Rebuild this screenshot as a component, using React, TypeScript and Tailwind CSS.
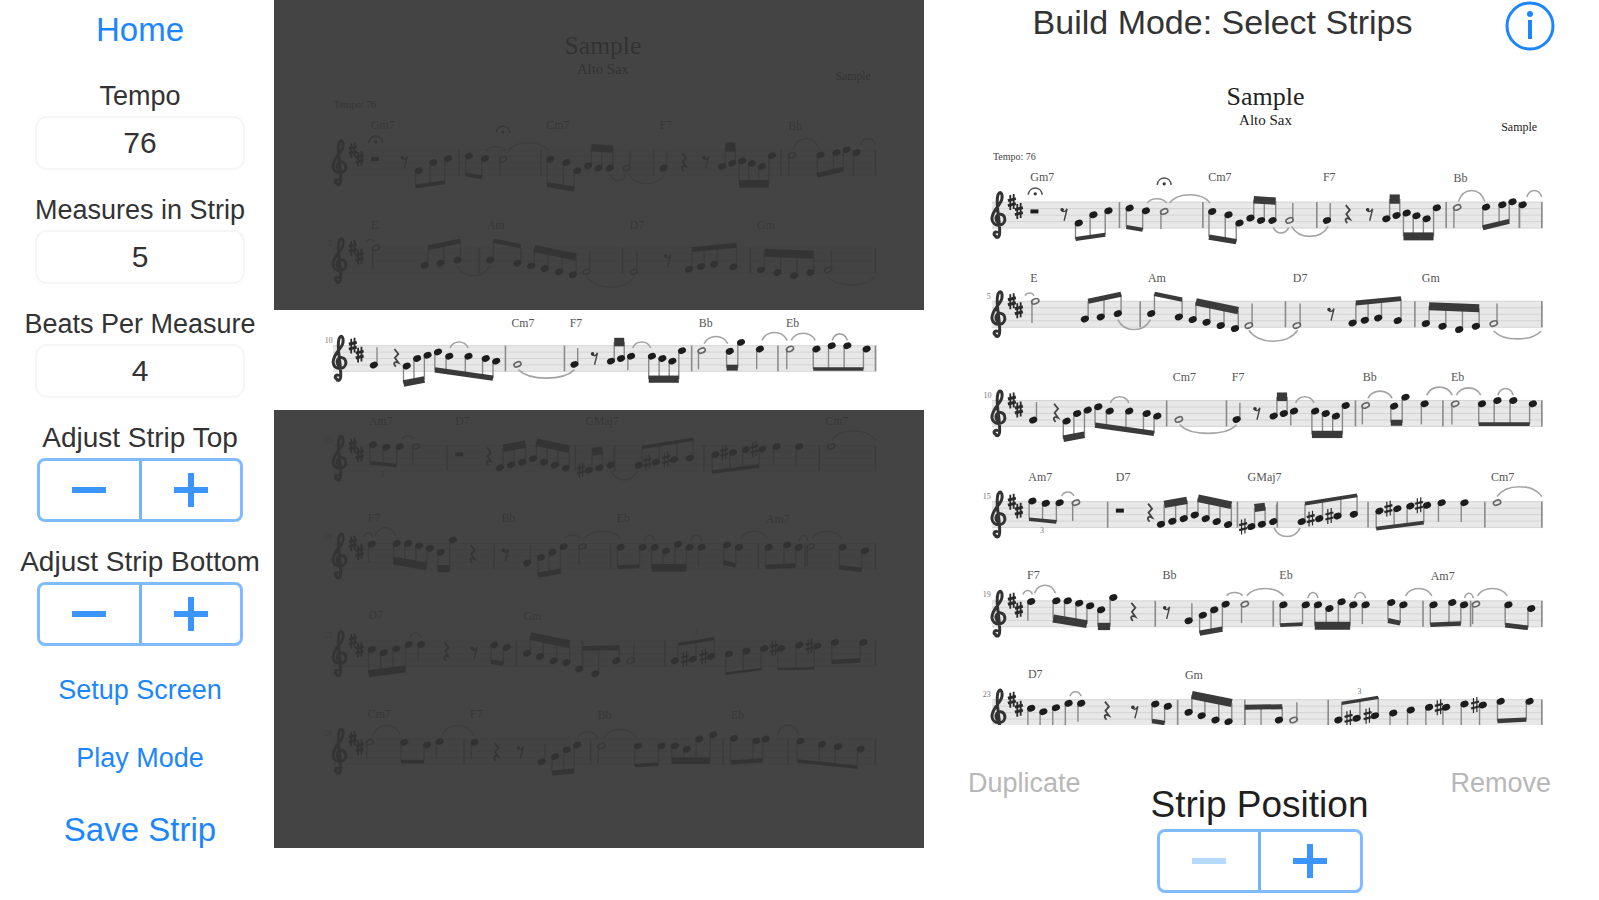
import { useId, useState } from "react";

type Point = [x: number, y: number];
type Stemmed = [x: number, y: number, stem?: number];
type Slur = [x1: number, x2: number, y: number, peak: number];
type Beam = [y1: number, y2: number, thickness: number, ...notes: Point[]];

interface System {
  origin: number;
  top: number;
  chords: [x: number, y: number, name: string][];
  bars: number[];
  notes?: Stemmed[];
  hollow?: Stemmed[];
  beams: Beam[];
  slurs: Slur[];
  sharps?: Point[];
  fermatas?: Point[];
  halfRests?: Point[];
  quarterRests?: Point[];
  eighthRests?: Point[];
  marks?: [x: number, y: number, text: string][];
}

const systems: System[] = [
  {
    origin: 0,
    top: 607,
    chords: [[173, 544, "Gm7"], [610, 544, "Cm7"], [892, 544, "F7"], [1213, 546, "Bb"]],
    bars: [392, 597, 877, 1195, 1375, 1430],
    notes: [[902, 662, 610]],
    hollow: [[502, 635, 688], [810, 662, 610], [1222, 623, 685]],
    beams: [
      [718, 705, 12, [292, 670], [328, 645], [365, 633]],
      [682, 690, 12, [417, 625], [457, 633]],
      [712, 726, 16, [620, 635], [660, 645], [687, 670]],
      [600, 604, 22, [714, 655], [740, 662], [768, 662]],
      [598, 598, 28, [1048, 657], [1073, 647]],
      [710, 710, 24, [1098, 640], [1122, 648], [1147, 657], [1172, 624]],
      [684, 665, 15, [1293, 622], [1333, 615], [1358, 606]],
      [685, 685, 2, [1383, 615]],
    ],
    slurs: [
      [460, 508, 610, 597],
      [515, 615, 610, 585],
      [770, 808, 683, 700],
      [815, 905, 680, 710],
      [1225, 1290, 605, 572],
      [1393, 1430, 592, 572],
    ],
    fermatas: [[185, 582], [502, 552]],
    halfRests: [[183, 635]],
    quarterRests: [[952, 643]],
    eighthRests: [[256, 642], [1007, 642]],
  },
  {
    origin: 250,
    top: 155,
    chords: [[173, 97, "E"], [462, 97, "Am"], [818, 97, "D7"], [1135, 97, "Gm"]],
    bars: [443, 800, 1118, 1430],
    hollow: [[185, 155, 220], [710, 228, 162], [828, 228, 162], [1312, 222, 162]],
    beams: [
      [155, 134, 15, [307, 208], [346, 202], [388, 192]],
      [133, 150, 13, [470, 192], [538, 202]],
      [157, 183, 22, [572, 210], [606, 218], [641, 228], [676, 237]],
      [160, 147, 15, [965, 220], [995, 212], [1028, 205], [1076, 213]],
      [170, 176, 24, [1145, 222], [1186, 230], [1227, 240], [1268, 230]],
    ],
    slurs: [
      [160, 182, 138, 130],
      [388, 468, 210, 240],
      [710, 830, 242, 275],
      [1312, 1428, 244, 268],
    ],
    eighthRests: [[912, 192]],
    marks: [[66, 148, "5"]],
  },
  {
    origin: 250,
    top: 453,
    chords: [[523, 395, "Cm7"], [668, 395, "F7"], [990, 395, "Bb"], [1207, 395, "Eb"]],
    bars: [508, 655, 972, 1187, 1430],
    notes: [[180, 512, 458], [680, 510, 460], [821, 485, 528], [1142, 463, 525]],
    hollow: [[538, 510], [997, 468, 525], [1217, 463, 525]],
    beams: [
      [568, 556, 20, [262, 515], [288, 492], [314, 482]],
      [527, 552, 16, [340, 472], [368, 485], [416, 485], [459, 492], [485, 500]],
      [442, 442, 26, [771, 500], [796, 492]],
      [555, 555, 22, [873, 485], [899, 492], [924, 500], [948, 468]],
      [520, 520, 18, [1067, 470], [1095, 443]],
      [524, 524, 11, [1283, 463], [1321, 453], [1360, 453], [1408, 463]],
    ],
    slurs: [
      [370, 415, 460, 442],
      [540, 680, 526, 552],
      [825, 870, 460, 442],
      [1003, 1062, 447, 425],
      [1147, 1210, 437, 413],
      [1220, 1280, 437, 415],
      [1322, 1360, 437, 417],
    ],
    quarterRests: [[235, 490]],
    eighthRests: [[730, 490]],
    marks: [[58, 446, "10"]],
  },
  {
    origin: 450,
    top: 157,
    chords: [[168, 95, "Am7"], [383, 95, "D7"], [707, 95, "GMaj7"], [1305, 95, "Cm7"]],
    bars: [363, 682, 780, 1003, 1290, 1430],
    notes: [[770, 217, 165], [1184, 160, 218], [1240, 160, 218]],
    hollow: [[285, 160, 215], [1320, 160]],
    beams: [
      [210, 218, 11, [178, 155], [211, 162], [245, 160]],
      [165, 153, 22, [494, 225], [522, 216], [550, 208]],
      [147, 168, 23, [577, 197], [604, 208], [631, 217], [659, 226]],
      [176, 172, 24, [716, 232], [742, 225]],
      [163, 138, 11, [840, 217], [883, 208], [928, 200], [968, 195]],
      [238, 220, 11, [1031, 185], [1075, 178], [1107, 170], [1148, 168]],
    ],
    slurs: [
      [250, 280, 140, 128],
      [772, 836, 236, 262],
      [1320, 1430, 142, 112],
    ],
    sharps: [[696, 232], [862, 208], [908, 200], [1053, 178], [1128, 168]],
    halfRests: [[393, 184]],
    quarterRests: [[466, 190]],
    marks: [[56, 150, "15"], [197, 252, "3"]],
  },
  {
    origin: 450,
    top: 455,
    chords: [[165, 390, "F7"], [498, 390, "Bb"], [785, 390, "Eb"], [1157, 393, "Am7"]],
    bars: [480, 770, 1138, 1255, 1430],
    notes: [[175, 457, 515], [562, 515, 462], [997, 467, 525]],
    hollow: [[700, 465, 522], [1268, 465, 525]],
    beams: [
      [508, 525, 24, [237, 455], [265, 455], [293, 462], [320, 470]],
      [532, 532, 22, [347, 482], [377, 445]],
      [552, 540, 16, [597, 498], [625, 482], [653, 465]],
      [528, 525, 12, [795, 467], [850, 467]],
      [530, 530, 24, [880, 467], [908, 478], [938, 458], [967, 467]],
      [514, 522, 15, [1060, 460], [1090, 467]],
      [527, 523, 14, [1164, 467], [1210, 460], [1239, 467]],
      [528, 536, 14, [1348, 467], [1404, 478]],
    ],
    slurs: [
      [155, 178, 436, 424],
      [183, 235, 432, 408],
      [655, 695, 440, 430],
      [705, 795, 440, 418],
      [855, 880, 447, 430],
      [970, 997, 447, 430],
      [1095, 1160, 440, 418],
      [1240, 1262, 447, 432],
      [1272, 1345, 440, 418],
    ],
    quarterRests: [[425, 488]],
    eighthRests: [[508, 488]],
    marks: [[56, 444, "19"]],
  },
  {
    origin: 450,
    top: 752,
    chords: [[167, 686, "D7"], [553, 690, "Gm"]],
    bars: [535, 700, 905, 1430],
    notes: [[298, 763, 818]],
    hollow: [[820, 813, 760]],
    beams: [
      [852, 838, 22, [175, 778], [205, 788], [236, 776], [267, 763]],
      [816, 822, 14, [480, 765], [511, 772]],
      [738, 762, 24, [562, 790], [594, 800], [628, 813], [660, 818]],
      [775, 773, 15, [692, 838], [732, 852], [784, 813]],
      [763, 745, 10, [930, 813], [975, 808], [1020, 800]],
      [852, 838, 8, [1065, 792], [1108, 783], [1153, 775]],
      [838, 836, 8, [1195, 775], [1240, 765], [1285, 768]],
      [816, 812, 13, [1329, 757], [1400, 757]],
    ],
    slurs: [[270, 298, 742, 728]],
    sharps: [[955, 808], [1002, 800], [1177, 775], [1266, 768]],
    quarterRests: [[360, 785]],
    eighthRests: [[430, 787]],
    marks: [[56, 744, "23"], [977, 734, "3"]],
  },
  {
    origin: 450,
    top: 1050,
    chords: [[165, 988, "Cm7"], [420, 988, "F7"], [738, 990, "Bb"], [1070, 990, "Eb"]],
    bars: [405, 720, 1050, 1212, 1430],
    notes: [[431, 1061, 1112], [598, 1120, 1066]],
    hollow: [[170, 1061, 1112], [747, 1072, 1124]],
    beams: [
      [1120, 1120, 11, [256, 1061], [313, 1069]],
      [1112, 1112, 2, [344, 1059]],
      [1155, 1148, 16, [632, 1104], [661, 1084], [687, 1069]],
      [1132, 1128, 11, [838, 1072], [897, 1072]],
      [1117, 1117, 20, [930, 1072], [960, 1082], [991, 1051], [1026, 1038]],
      [1122, 1116, 13, [1077, 1049], [1133, 1057], [1157, 1051]],
      [1118, 1137, 11, [1243, 1057], [1297, 1067], [1337, 1074], [1393, 1082]],
    ],
    slurs: [
      [178, 246, 1040, 1010],
      [350, 428, 1040, 1010],
      [687, 738, 1050, 1028],
      [752, 836, 1050, 1022],
      [1185, 1240, 1040, 1008],
    ],
    quarterRests: [[484, 1090]],
    eighthRests: [[545, 1090]],
    marks: [[56, 1042, "28"]],
  },
];

// Engraving grid -> page units.
const px = (x: number) => 960 + x * 0.4075;
const STEM = 8;

function Sharp({ x, y, bold }: { x: number; y: number; bold?: boolean }) {
  return (
    <g transform={`translate(${x} ${y})`} fill="none" stroke="#2a2a2a">
      <path d="M-1.6 -7V8M1.8 -8V7" strokeWidth={bold ? 1.8 : 1.2} />
      <path d="M-4 -1.5L4 -3.5M-4 3.5L4 1.5" strokeWidth={bold ? 3 : 2.2} />
    </g>
  );
}

function Staff({ system }: { system: System }) {
  const py = (y: number) => system.origin + y / 3;
  const top = py(system.top);
  const stem = (x: number, y: number, end: number) => {
    const sx = px(end > y ? x - STEM : x + STEM);
    return <path key={`s${x}`} d={`M${sx} ${py(y)}V${py(end)}`} stroke="#888" strokeWidth="1.4" />;
  };
  const head = (x: number, y: number) => (
    <ellipse
      key={`h${x}`}
      rx="4.2"
      ry="3.2"
      fill="#1c1c1c"
      transform={`translate(${px(x)} ${py(y)}) rotate(-22)`}
    />
  );

  return (
    <g fill="none">
      <rect x="992" y={top} width="552" height="26" fill="#e8e8e8" />
      <path
        d={[0, 1, 2, 3, 4].map((i) => `M992 ${top + i * 6.5}H1544`).join("")}
        stroke="#d4d4d4"
      />
      <path
        transform={`translate(990 ${top - 12})`}
        d="M6 46C3 45 4 41 7 42M6 47C11 49 10 40 9 30C8 20 6 12 8 5C10 0 13 3 12 9C11 15 2 20 2 29C3 37 14 37 15 30C15 23 7 22 6 28C6 31 8 33 9 33"
        stroke="#333"
        strokeWidth="3"
        strokeLinecap="round"
      />
      <Sharp x={1012} y={top} bold />
      <Sharp x={1019} y={top + 9} bold />
      {system.bars.map((x) => (
        <path key={x} d={`M${px(x)} ${top}v26`} stroke="#8a8a8a" strokeWidth="1.6" />
      ))}
      {system.chords.map(([x, y, name]) => (
        <text key={x} x={px(x)} y={py(y)} fontSize="12" fill="#555">
          {name}
        </text>
      ))}
      {system.marks?.map(([x, y, text]) => (
        <text key={x} x={px(x)} y={py(y)} fontSize="8" fill="#777">
          {text}
        </text>
      ))}
      {system.slurs.map(([x1, x2, y, peak]) => {
        const c = py(y + (peak - y) * 1.33);
        const inset = (x2 - x1) * 0.2;
        return (
          <path
            key={x1}
            d={`M${px(x1)} ${py(y)}C${px(x1 + inset)} ${c} ${px(x2 - inset)} ${c} ${px(x2)} ${py(y)}`}
            stroke="#a4a4a4"
            strokeWidth="1.6"
          />
        );
      })}
      {system.notes?.map(([x, y, end]) => (
        <g key={x}>
          {end && stem(x, y, end)}
          {head(x, y)}
        </g>
      ))}
      {system.hollow?.map(([x, y, end]) => (
        <g key={x}>
          {end && stem(x, y, end)}
          <ellipse
            rx="3.8"
            ry="2.4"
            stroke="#666"
            strokeWidth="1.6"
            transform={`translate(${px(x)} ${py(y)}) rotate(-22)`}
          />
        </g>
      ))}
      {system.beams.map(([y1, y2, thickness, ...notes]) => {
        const offset = y1 > notes[0][1] ? -STEM : STEM;
        const first = notes[0][0];
        const last = notes[notes.length - 1][0];
        const at = (x: number) => (last === first ? y1 : y1 + ((y2 - y1) * (x - first)) / (last - first));
        return (
          <g key={first}>
            {notes.map(([x, y]) => stem(x, y, at(x)))}
            <path
              d={`M${px(first + offset)} ${py(y1)}L${px(last + offset)} ${py(y2)}`}
              stroke="#3a3a3a"
              strokeWidth={thickness / 3}
            />
            {notes.map(([x, y]) => head(x, y))}
          </g>
        );
      })}
      {system.sharps?.map(([x, y]) => <Sharp key={x} x={px(x)} y={py(y)} />)}
      {system.fermatas?.map(([x, y]) => (
        <g key={x} transform={`translate(${px(x)} ${py(y)})`}>
          <path d="M-7 1C-6 -8 6 -8 7 1" stroke="#555" strokeWidth="1.6" />
          <circle r="1.6" fill="#333" />
        </g>
      ))}
      {system.halfRests?.map(([x, y]) => (
        <rect key={x} x={px(x) - 4} y={py(y) - 2} width="8" height="4" fill="#1c1c1c" />
      ))}
      {system.quarterRests?.map(([x, y]) => (
        <path
          key={x}
          transform={`translate(${px(x)} ${py(y)})`}
          d="M-1.5 -9L2.5 -4L-1 0L2.5 5C-2 3 -3 6 0 9"
          stroke="#444"
          strokeWidth="1.8"
        />
      ))}
      {system.eighthRests?.map(([x, y]) => (
        <g key={x} transform={`translate(${px(x)} ${py(y)})`}>
          <path d="M-2 -3C0 -1 2 -3 3 -5L0 7" stroke="#444" strokeWidth="1.4" />
          <circle cx="-2" cy="-4" r="1.8" fill="#333" />
        </g>
      ))}
    </g>
  );
}

interface ScoreProps {
  viewBox: string;
  count: number;
}

function Score({ viewBox, count }: ScoreProps) {
  return (
    <svg
      viewBox={viewBox}
      className="block h-auto w-full font-['Liberation_Serif',serif]"
      role="img"
      aria-label="Sample, Alto Sax"
    >
      <text x="1266" y="105" fontSize="26" textAnchor="middle" fill="#222">
        Sample
      </text>
      <text x="1266" y="125" fontSize="15" textAnchor="middle" fill="#222">
        Alto Sax
      </text>
      <text x="1538" y="131" fontSize="12" textAnchor="end" fill="#222">
        Sample
      </text>
      <text x="993" y="160" fontSize="10" fill="#444">
        Tempo: 76
      </text>
      {systems.slice(0, count).map((system) => (
        <Staff key={system.origin + system.top} system={system} />
      ))}
    </svg>
  );
}

interface StepperProps {
  label: string;
  onStep: (delta: number) => void;
  minusDisabled?: boolean;
}

function Stepper({ label, onStep, minusDisabled }: StepperProps) {
  return (
    <div
      role="group"
      aria-label={label}
      className="flex h-16 w-[206px] divide-x-[3px] divide-[#74b4ff] rounded-lg border-[3px] border-[#80baff] text-[#3b95fc]"
    >
      <button
        type="button"
        aria-label="Decrease"
        disabled={minusDisabled}
        onClick={() => onStep(-1)}
        className="flex flex-1 items-center justify-center disabled:text-[#b5d9ff]"
      >
        <svg width="34" height="34" viewBox="0 0 34 34" stroke="currentColor" strokeWidth="6">
          <path d="M0 17H34" />
        </svg>
      </button>
      <button
        type="button"
        aria-label="Increase"
        onClick={() => onStep(1)}
        className="flex flex-1 items-center justify-center"
      >
        <svg width="34" height="34" viewBox="0 0 34 34" stroke="currentColor" strokeWidth="6">
          <path d="M0 17H34M17 0V34" />
        </svg>
      </button>
    </div>
  );
}

interface FieldProps {
  label: string;
  value: string;
  onChange: (value: string) => void;
}

function Field({ label, value, onChange }: FieldProps) {
  const id = useId();

  return (
    <div className="mb-6 flex flex-col items-center gap-1">
      <label htmlFor={id} className="text-[27px] leading-8 whitespace-nowrap">
        {label}
      </label>
      <input
        id={id}
        value={value}
        inputMode="numeric"
        onChange={(e) => onChange(e.target.value)}
        className="h-[54px] w-[210px] rounded-xl border-2 border-[#f6f6f6] bg-white text-center text-[30px] outline-none"
      />
    </div>
  );
}

export default function App() {
  const [tempo, setTempo] = useState("76");
  const [measures, setMeasures] = useState("5");
  const [beats, setBeats] = useState("4");
  const [stripTop, setStripTop] = useState(36.5);
  const [stripBottom, setStripBottom] = useState(48.4);
  const [position, setPosition] = useState(0);

  return (
    <main className="grid min-h-screen grid-cols-[274fr_650fr_675fr] items-start bg-white font-['Liberation_Sans',Arial,sans-serif] text-[#333]">
      <aside className="flex min-w-0 flex-col items-center pt-2.5 pl-1.5">
        <button type="button" className="mb-7.5 text-[33px] leading-10 text-[#1d86fd]">
          Home
        </button>

        <Field label="Tempo" value={tempo} onChange={setTempo} />
        <Field label="Measures in Strip" value={measures} onChange={setMeasures} />
        <Field label="Beats Per Measure" value={beats} onChange={setBeats} />

        <div className="mb-6 flex flex-col items-center gap-1">
          <p className="text-[28px] leading-8 whitespace-nowrap">Adjust Strip Top</p>
          <Stepper label="Adjust Strip Top" onStep={(d) => setStripTop(stripTop + d)} />
        </div>
        <div className="mb-7 flex flex-col items-center gap-1">
          <p className="text-[28px] leading-8 whitespace-nowrap">Adjust Strip Bottom</p>
          <Stepper label="Adjust Strip Bottom" onStep={(d) => setStripBottom(stripBottom + d)} />
        </div>

        <div className="flex flex-col items-center gap-9 text-[#1d86fd]">
          <button type="button" className="text-[27px] leading-8">
            Setup Screen
          </button>
          <button type="button" className="text-[27px] leading-8">
            Play Mode
          </button>
          <button type="button" className="text-[33px] leading-10">
            Save Strip
          </button>
        </div>
      </aside>

      <section className="relative min-w-0" aria-label="Current strip">
        <Score viewBox="932 50 660 861" count={7} />
        <div
          className="absolute inset-x-0 top-0 bg-[#343434]/92"
          style={{ height: `${stripTop}%` }}
        />
        <div
          className="absolute inset-x-0 bottom-0 bg-[#343434]/92"
          style={{ top: `${stripBottom}%` }}
        />
      </section>

      <section className="min-w-0">
        <header className="flex h-[52px] items-start pr-11 pl-4">
          <h1 className="flex-1 pt-0.5 text-center text-[34px] leading-10">
            Build Mode: Select Strips
          </h1>
          <button type="button" aria-label="Info" className="text-[#1d86fd]">
            <svg width="50" height="51" viewBox="0 0 50 51" fill="none" stroke="currentColor">
              <circle cx="25" cy="26" r="23" strokeWidth="3" />
              <path d="M25 20V39" strokeWidth="4" />
              <circle cx="25" cy="14" r="3" fill="currentColor" stroke="none" />
            </svg>
          </button>
        </header>

        <div className="px-2">
          <Score viewBox="932 52 660 674" count={6} />
        </div>

        <footer className="mt-[42px] grid grid-cols-[1fr_auto_1fr] items-start pr-12 pl-11">
          <button
            type="button"
            disabled
            className="justify-self-start text-[27px] leading-8 text-[#b8b8b8]"
          >
            Duplicate
          </button>
          <div className="flex flex-col items-center gap-0.5 pt-4">
            <p className="text-[37px] leading-[44px] text-[#1f1f1f]">Strip Position</p>
            <Stepper
              label="Strip Position"
              minusDisabled={position === 0}
              onStep={(d) => setPosition(position + d)}
            />
          </div>
          <button
            type="button"
            disabled
            className="justify-self-end text-[27px] leading-8 text-[#b8b8b8]"
          >
            Remove
          </button>
        </footer>
      </section>
    </main>
  );
}
